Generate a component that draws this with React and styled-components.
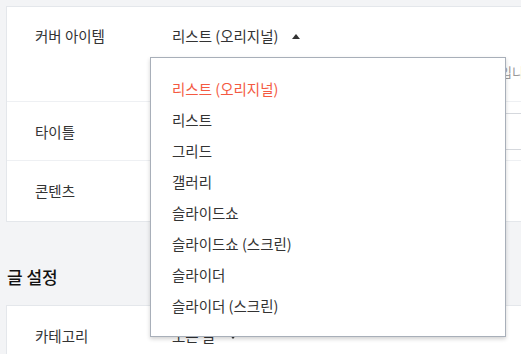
import React from "react";
import styled, { createGlobalStyle } from "styled-components";

const Global = createGlobalStyle`
  html, body { margin: 0; padding: 0; }
  body {
    background: #f3f4f6;
    overflow: hidden;
    font-family: "Noto Sans CJK KR", "Noto Sans", sans-serif;
    color: #333;
  }
`;

const Page = styled.div`
  padding: 6px 0 0 6px;
  width: 600px;
`;

const Card = styled.section`
  background: #fff;
  border: 1px solid #e4e7eb;
  border-right: none;
  width: 560px;
`;

const Row = styled.div`
  display: grid;
  grid-template-columns: 137px 1fr;
  padding: ${(p) => p.$pad || "19px 0"};
  padding-left: 28px;
  border-top: ${(p) => (p.$first ? "none" : "1px solid #eef0f3")};
  min-height: ${(p) => p.$min || "auto"};
  box-sizing: border-box;
  align-items: ${(p) => p.$align || "start"};
`;

const Label = styled.div`
  font-size: 14.5px;
  line-height: 20px;
  color: #333;
`;

const Content = styled.div`
  display: flex;
  flex-direction: column;
  gap: 16px;
`;

const Select = styled.div`
  position: relative;
  display: flex;
  align-items: center;
  gap: 14px;
  font-size: 14.5px;
  line-height: 20px;
  color: #333;
`;

const Caret = styled.span`
  width: 0;
  height: 0;
  border-left: 4px solid transparent;
  border-right: 4px solid transparent;
  ${(p) =>
    p.$up
      ? "border-bottom: 5px solid #333;"
      : "border-top: 5px solid #333;"}
`;

const Help = styled.div`
  font-size: 13px;
  line-height: 20px;
  color: #999;
  white-space: nowrap;
`;

const Input = styled.div`
  height: 37px;
  box-sizing: border-box;
  border: 1px solid #d5d8dd;
  width: 380px;
`;

const Heading = styled.h2`
  margin: 43px 0 16px 1px;
  font-size: 17px;
  line-height: 24px;
  font-weight: 500;
  color: #111;
`;

const Menu = styled.ul`
  position: absolute;
  left: -22px;
  top: 31px;
  width: 356px;
  box-sizing: border-box;
  margin: 0;
  padding: 15px 0 15px;
  list-style: none;
  background: #fff;
  border: 1px solid #a8afb9;
  box-shadow: 0 2px 4px rgba(0, 0, 0, 0.18);
  z-index: 10;
`;

const Item = styled.li`
  height: 31px;
  line-height: 31px;
  padding-left: 21px;
  font-size: 14.5px;
  color: ${(p) => (p.$active ? "#f45a42" : "#333")};
  white-space: nowrap;
`;

const items = [
  "리스트 (오리지널)",
  "리스트",
  "그리드",
  "갤러리",
  "슬라이드쇼",
  "슬라이드쇼 (스크린)",
  "슬라이더",
  "슬라이더 (스크린)",
];

export default function App() {
  return (
    <>
      <Global />
      <Page>
        <Card>
          <Row $first>
            <Label>커버 아이템</Label>
            <Content>
              <Select>
                리스트 (오리지널)
                <Caret $up />
                <Menu>
                  {items.map((t, i) => (
                    <Item key={t} $active={i === 0}>
                      {t}
                    </Item>
                  ))}
                </Menu>
              </Select>
              <Help>블로그 홈 상단 커버 영역에 표시할 글 목록 형태를 선택하는 곳입니다.</Help>
            </Content>
          </Row>
          <Row $pad="11px 0 10px" $align="center">
            <Label>타이틀</Label>
            <Input />
          </Row>
          <Row $pad="0" $min="61px" $align="center">
            <Label>콘텐츠</Label>
            <div />
          </Row>
        </Card>
        <Heading>글 설정</Heading>
        <Card>
          <Row $first $pad="20px 0">
            <Label>카테고리</Label>
            <Select>
              모든 글
              <Caret />
            </Select>
          </Row>
        </Card>
      </Page>
    </>
  );
}
